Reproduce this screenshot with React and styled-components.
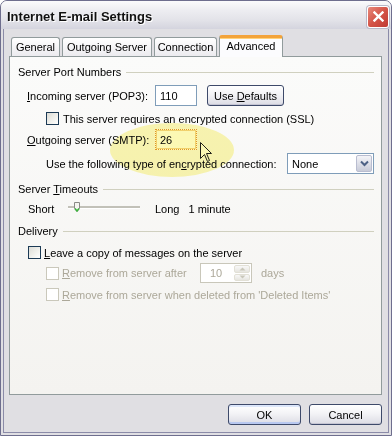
import React from 'react';
import styled, { createGlobalStyle, css } from 'styled-components';

const GlobalStyle = createGlobalStyle`
  html, body {
    margin: 0;
    padding: 0;
    background: #ffffff;
  }
  body {
    font-family: "Liberation Sans", Arial, sans-serif;
    font-size: 11px;
    color: #000;
  }
`;

const Window = styled.div`
  position: relative;
  width: 392px;
  height: 436px;
  box-sizing: border-box;
  border: 1px solid #6e6e8e;
  border-radius: 7px 7px 0 0;
  background: #e0dfe3;
  display: flex;
  flex-direction: column;
  overflow: hidden;
`;

const TitleBar = styled.div`
  height: 28px;
  flex: none;
  display: flex;
  align-items: center;
  justify-content: space-between;
  padding: 0 2px 0 6px;
  background: linear-gradient(#fbfbfc 0%, #eeeef2 30%, #e2e2e8 70%, #d4d4de 100%);
`;

const Title = styled.div`
  font-weight: bold;
  font-size: 13px;
  color: #111;
  text-shadow: 1px 1px 0 #ffffff;
  padding-top: 2px;
`;

const CloseButton = styled.div`
  width: 22px;
  height: 22px;
  margin-top: 3px;
  box-sizing: border-box;
  border: 1px solid #ffffff;
  border-radius: 3px;
  background: linear-gradient(135deg, #e88a7c 0%, #d45448 50%, #c03a33 100%);
  display: flex;
  align-items: center;
  justify-content: center;
  box-shadow: 0 0 0 1px #b8b8c8;
`;

const Body = styled.div`
  flex: 1;
  margin: 0 2px 2px;
  border: 1px solid #8b8ba8;
  border-top: none;
  padding: 6px 6px 0 5px;
  display: flex;
  flex-direction: column;
`;

const TabStrip = styled.div`
  height: 22px;
  margin-bottom: -1px;
  padding-left: 2px;
  display: flex;
  align-items: flex-end;
  position: relative;
  z-index: 2;
`;

const Tab = styled.div`
  box-sizing: border-box;
  width: ${p => p.w}px;
  margin-right: 2px;
  display: flex;
  align-items: center;
  justify-content: center;
  border: 1px solid #919b9c;
  border-bottom: none;
  border-radius: 3px 3px 0 0;
  ${p => p.active ? css`
    height: 22px;
    padding-bottom: 3px;
    background: #fcfcfe;
    border-top: 3px solid #f3a33a;
    box-shadow: inset 0 1px 0 #ffd27a;
  ` : css`
    height: 19px;
    margin-bottom: 1px;
    background: linear-gradient(#ffffff, #ecebef);
  `}
`;

const Panel = styled.div`
  position: relative;
  height: 339px;
  box-sizing: border-box;
  border: 1px solid #919b9c;
  background: linear-gradient(#fbfbfa, #f4f3f0);
  padding: 8px 7px 0 8px;
  display: flex;
  flex-direction: column;
`;

const GroupHeader = styled.div`
  height: 14px;
  margin-top: ${p => p.mt || 0}px;
  display: flex;
  align-items: center;
  &::after {
    content: '';
    flex: 1;
    height: 1px;
    margin-left: 5px;
    background: #d0d0bf;
  }
`;

const Row = styled.div`
  display: flex;
  align-items: center;
  height: ${p => p.h || 13}px;
  margin-top: ${p => p.mt || 0}px;
  padding-left: ${p => p.indent || 0}px;
  color: ${p => (p.disabled ? '#aca899' : '#000')};
  position: relative;
  z-index: 1;
`;

const Label = styled.span`
  width: ${p => (p.w ? `${p.w}px` : 'auto')};
  flex: none;
  margin-left: ${p => p.ml || 0}px;
  white-space: nowrap;
`;

const Key = styled.span`
  text-decoration: underline;
  text-underline-offset: 1px;
`;

const TextBox = styled.div`
  box-sizing: border-box;
  width: 42px;
  height: 21px;
  padding: 0 0 0 4px;
  display: flex;
  align-items: center;
  background: #ffffff;
  ${p => p.focus ? css`
    border: 1px dotted #e29a3c;
    outline: 1px solid #f4d79a;
    outline-offset: -2px;
  ` : css`
    border: 1px solid #7f9db9;
  `}
`;

const PushButton = styled.div`
  box-sizing: border-box;
  width: ${p => p.w}px;
  height: ${p => p.h || 21}px;
  margin-left: ${p => p.ml || 0}px;
  display: flex;
  align-items: center;
  justify-content: center;
  border: 1px solid #3e4a6a;
  border-radius: 3px;
  background: linear-gradient(#ffffff 0%, #f3f3f6 45%, #dcdce4 100%);
  box-shadow: inset 0 -1px 0 #c5c5d3;
  ${p => p.isDefault && css`
    box-shadow: inset 0 -2px 0 #b8c8f0, inset 0 2px 0 #dce6fa;
  `}
`;

const Check = styled.div`
  box-sizing: border-box;
  width: 13px;
  height: 13px;
  flex: none;
  border: 1px solid ${p => (p.disabled ? '#cac8bb' : '#1c3a55')};
  background: ${p => (p.disabled
    ? '#ffffff'
    : 'linear-gradient(135deg, #dcdcd6 0%, #f2f2ee 60%, #ffffff 100%)')};
`;

const Select = styled.div`
  box-sizing: border-box;
  width: 87px;
  height: 21px;
  margin-left: auto;
  border: 1px solid #7f9db9;
  background: #ffffff;
  display: flex;
  align-items: center;
  justify-content: space-between;
  padding: 0 1px 0 4px;
`;

const DropButton = styled.div`
  width: 16px;
  height: 17px;
  box-sizing: border-box;
  border: 1px solid #b9bdd0;
  border-radius: 2px;
  background: linear-gradient(#f4f4f8, #c8cbd8);
  display: flex;
  align-items: center;
  justify-content: center;
`;

const Track = styled.div`
  position: relative;
  width: 72px;
  height: 14px;
  flex: none;
  &::before {
    content: '';
    position: absolute;
    left: 0;
    right: 0;
    top: 4px;
    height: 2px;
    background: #c2c1b8;
    border-bottom: 1px solid #ffffff;
  }
`;

const Thumb = styled.svg`
  position: absolute;
  left: 6px;
  top: 0;
`;

const Spin = styled.div`
  box-sizing: border-box;
  width: 52px;
  height: 20px;
  flex: none;
  border: 1px solid #c9c7ba;
  background: #ffffff;
  display: flex;
  align-items: center;
  justify-content: space-between;
  padding: 0 1px 0 9px;
  color: #aca899;
`;

const SpinButtons = styled.div`
  width: 16px;
  height: 16px;
  display: flex;
  flex-direction: column;
  gap: 1px;
`;

const SpinHalf = styled.div`
  flex: 1;
  border-radius: 2px;
  background: linear-gradient(#f8f8f8, #e6e5df);
  border: 1px solid #e2e0d6;
  display: flex;
  align-items: center;
  justify-content: center;
`;

const Highlight = styled.div`
  position: absolute;
  left: 100px;
  top: 66px;
  width: 124px;
  height: 54px;
  border-radius: 50%;
  background: radial-gradient(ellipse at center, #fcf8b4 0%, #fcf8b4 80%, rgba(252, 248, 180, 0) 100%);
  mix-blend-mode: multiply;
  pointer-events: none;
  z-index: 3;
`;

const Cursor = styled.svg`
  position: absolute;
  left: 190px;
  top: 85px;
  z-index: 2;
`;

const Footer = styled.div`
  display: flex;
  justify-content: flex-end;
  gap: 8px;
  margin-top: 9px;
`;

const Chevron = () => (
  <svg width="9" height="7" viewBox="0 0 9 7">
    <path d="M1 1.5 L4.5 5 L8 1.5" fill="none" stroke="#4d6185" strokeWidth="2" />
  </svg>
);

const SpinArrow = ({ up }) => (
  <svg width="7" height="4" viewBox="0 0 7 4">
    <path d={up ? 'M0.5 3.5 L3.5 0.5 L6.5 3.5 Z' : 'M0.5 0.5 L3.5 3.5 L6.5 0.5 Z'} fill="#c9c7ba" />
  </svg>
);

export default function App() {
  return (
    <>
      <GlobalStyle />
      <Window>
        <TitleBar>
          <Title>Internet E-mail Settings</Title>
          <CloseButton>
            <svg width="11" height="11" viewBox="0 0 11 11">
              <path d="M1.5 1.5 L9.5 9.5 M9.5 1.5 L1.5 9.5" stroke="#ffffff" strokeWidth="2.4" strokeLinecap="square" />
            </svg>
          </CloseButton>
        </TitleBar>
        <Body>
          <TabStrip>
            <Tab w={49}>General</Tab>
            <Tab w={90}>Outgoing Server</Tab>
            <Tab w={63}>Connection</Tab>
            <Tab w={64} active>Advanced</Tab>
          </TabStrip>
          <Panel>
            <Highlight />
            <Cursor width="13" height="21" viewBox="0 0 13 21">
              <path d="M0.5 0.5 L0.5 16.5 L4.5 12.5 L7.5 19.5 L9.5 18.5 L6.5 11.5 L11.5 11.5 Z" fill="#ffffff" stroke="#222" strokeWidth="1" />
            </Cursor>

            <GroupHeader><span>Server Port Numbers</span></GroupHeader>
            <Row h={21} mt={6} indent={9}>
              <Label w={128}><Key>I</Key>ncoming server (POP3):</Label>
              <TextBox>110</TextBox>
              <PushButton w={77} h={21} ml={10}><span>Use <Key>D</Key>efaults</span></PushButton>
            </Row>
            <Row mt={6} indent={28}>
              <Check />
              <Label ml={4}>This server requires an encrypted connection (SSL)</Label>
            </Row>
            <Row h={21} mt={4} indent={9}>
              <Label w={128}><Key>O</Key>utgoing server (SMTP):</Label>
              <TextBox focus>26</TextBox>
            </Row>
            <Row h={21} mt={3} indent={28}>
              <Label>Use the following type of en<Key>c</Key>rypted connection:</Label>
              <Select>
                <span>None</span>
                <DropButton><Chevron /></DropButton>
              </Select>
            </Row>

            <GroupHeader mt={8}><span>Server <Key>T</Key>imeouts</span></GroupHeader>
            <Row h={14} mt={6} indent={10}>
              <Label w={40}>Short</Label>
              <Track>
                <Thumb width="6" height="10" viewBox="0 0 6 10">
                  <path d="M0.5 0.5 H5.5 V6.5 L3 9.5 L0.5 6.5 Z" fill="#f4f4f0" stroke="#8a8a86" />
                  <path d="M1 6.5 L3 9 L5 6.5" fill="none" stroke="#3cb43c" strokeWidth="1.5" />
                </Thumb>
              </Track>
              <Label ml={15}>Long</Label>
              <Label ml={9}>1 minute</Label>
            </Row>

            <GroupHeader mt={8}><span>Delivery</span></GroupHeader>
            <Row mt={8} indent={10}>
              <Check />
              <Label ml={3}><Key>L</Key>eave a copy of messages on the server</Label>
            </Row>
            <Row h={20} mt={4} indent={28} disabled>
              <Check disabled />
              <Label w={138} ml={3}><Key>R</Key>emove from server after</Label>
              <Spin>
                <span>10</span>
                <SpinButtons>
                  <SpinHalf><SpinArrow up /></SpinHalf>
                  <SpinHalf><SpinArrow /></SpinHalf>
                </SpinButtons>
              </Spin>
              <Label ml={9}>days</Label>
            </Row>
            <Row mt={5} indent={28} disabled>
              <Check disabled />
              <Label ml={3}><Key>R</Key>emove from server when deleted from 'Deleted Items'</Label>
            </Row>
          </Panel>
          <Footer>
            <PushButton w={73} isDefault>OK</PushButton>
            <PushButton w={73}>Cancel</PushButton>
          </Footer>
        </Body>
      </Window>
    </>
  );
}
